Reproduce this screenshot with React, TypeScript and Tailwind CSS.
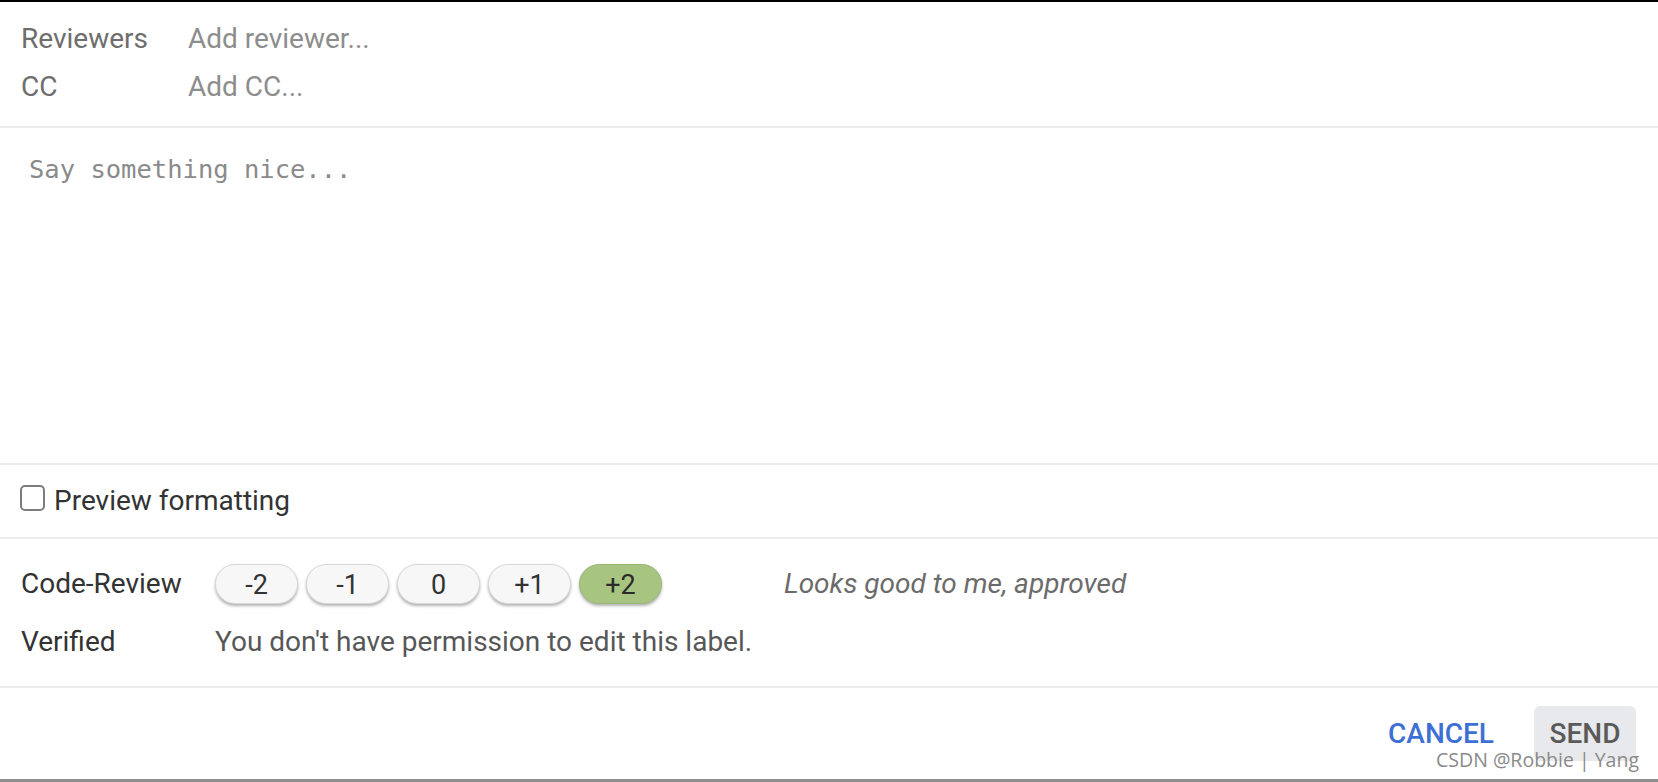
import React, { useState } from 'react';

const votes = ['-2', '-1', '0', '+1', '+2'];

const App: React.FC = () => {
    const [preview, setPreview] = useState(false);
    const [vote, setVote] = useState('+2');

    return (
        <div className="relative w-[1658px] h-[782px] flex flex-col bg-white border-t-2 border-b-[3px] border-t-black border-b-[#8f8f8f] font-['Roboto',sans-serif] text-[28px] overflow-hidden">
            {/* reviewers */}
            <div className="h-[124px] pt-[13px] pl-[21px] flex flex-col">
                <div className="h-[48px] flex items-center">
                    <span className="w-[167px] text-[#6e6e6e]">Reviewers</span>
                    <span className="text-[#8d8d8d]">Add reviewer...</span>
                </div>
                <div className="h-[48px] flex items-center">
                    <span className="w-[167px] text-[#6e6e6e]">CC</span>
                    <span className="text-[#8d8d8d]">Add CC...</span>
                </div>
            </div>

            {/* message */}
            <div className="h-[337px] border-t-2 border-[#ededed] pt-[23px] pl-[29px]">
                <div className="font-['DejaVu_Sans_Mono',monospace] text-[25.5px] leading-[36px] text-[#8a8a8a]">
                    Say something nice...
                </div>
            </div>

            {/* preview */}
            <div className="h-[74px] border-t-2 border-[#ededed] pl-[20px] flex items-center">
                <button
                    onClick={() => setPreview(!preview)}
                    className="w-[25px] h-[26px] border-2 border-[#7c7c7c] rounded-[5px] bg-white -mt-[6px]"
                />
                <span className="ml-[9px] text-[#333]">Preview formatting</span>
            </div>

            {/* labels */}
            <div className="h-[149px] border-t-2 border-[#ededed] pt-[21px] pl-[21px] flex flex-col gap-[10px]">
                <div className="h-[48px] flex items-center">
                    <span className="w-[194px] text-[#333]">Code-Review</span>
                    <div className="flex gap-[8px]">
                        {votes.map(v => (
                            <button
                                key={v}
                                onClick={() => setVote(v)}
                                className={
                                    v === vote
                                        ? 'w-[83px] h-[40px] rounded-full bg-[#a7c480] border border-[#9cb878] shadow-[0_2px_3px_rgba(0,0,0,0.3)] text-[27px] text-[#2a2a2a]'
                                        : 'w-[83px] h-[40px] rounded-full bg-[#f7f7f8] border border-[#d8d8d8] shadow-[0_2px_3px_rgba(0,0,0,0.3)] text-[27px] text-[#333]'
                                }
                            >
                                {v}
                            </button>
                        ))}
                    </div>
                    <span className="ml-[122px] italic text-[#6b6b6b]">Looks good to me, approved</span>
                </div>
                <div className="h-[48px] flex items-center">
                    <span className="w-[194px] text-[#333]">Verified</span>
                    <span className="text-[#575757]">You don't have permission to edit this label.</span>
                </div>
            </div>

            {/* actions */}
            <div className="h-[93px] border-t-2 border-[#ededed] pt-[18px] pr-[22px] flex justify-end items-start gap-[24px]">
                <button className="h-[55px] px-[16px] font-medium text-[#3d6fd4]">CANCEL</button>
                <button className="h-[55px] w-[102px] rounded-[6px] bg-[#e8e9ec] font-medium text-[#5a5a5a]">SEND</button>
            </div>

            {/* watermark */}
            <div className="absolute right-[19px] bottom-[5px] font-['Open_Sans',sans-serif] text-[19.5px] text-[#8a8a8a]">
                CSDN @Robbie | Yang
            </div>
        </div>
    );
};

export default App;
